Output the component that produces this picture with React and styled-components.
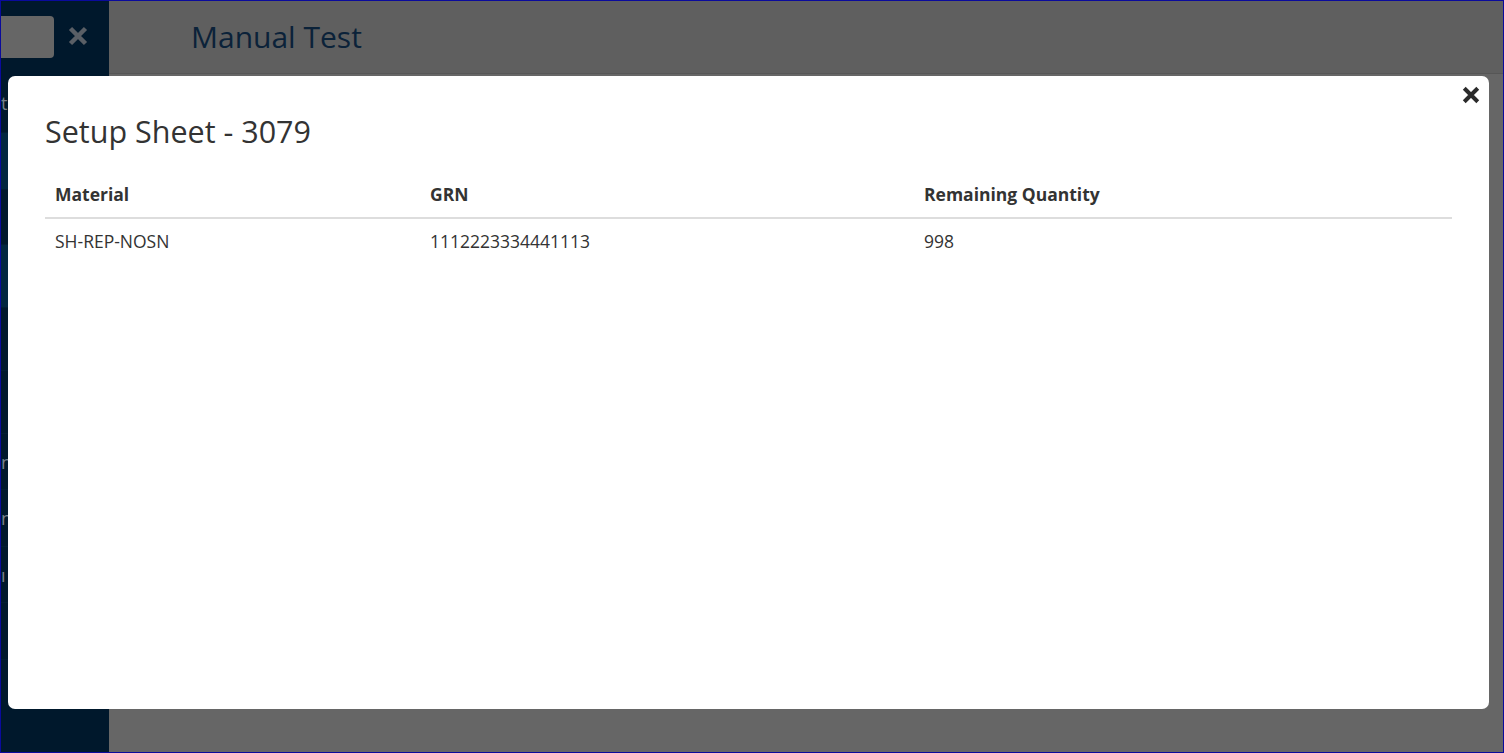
import React from 'react'
import styled, { createGlobalStyle } from 'styled-components'

const GlobalStyle = createGlobalStyle`
    html, body {
        margin: 0;
        padding: 0;
        background: #666666;
    }
    body {
        font-family: "Open Sans", "Liberation Sans", sans-serif;
    }
`

const rows = [
    { material: 'SH-REP-NOSN', grn: '1112223334441113', qty: '998' },
]

const menu = [
    { label: 'te', active: false, height: 60 },
    { label: '', active: true, height: 57 },
    { label: '', active: false, height: 55 },
    { label: '', active: true, height: 63 },
    { label: '', active: false, height: 63 },
    { label: '', active: false, height: 63 },
    { label: 'n', active: false, height: 56 },
    { label: 'n', active: false, height: 57 },
    { label: 'ı', active: false, height: 56 },
    { label: '', active: false, height: 57 },
]

const CloseIcon = ({ size, color }) => (
    <svg width={size} height={size} viewBox="0 0 16 16">
        <path d="M2 2 L14 14 M14 2 L2 14" stroke={color} strokeWidth="3.6" strokeLinecap="butt" />
    </svg>
)

const App = () => {
    return (
        <>
        <GlobalStyle />
        <Frame>
            <Sidebar>
                <SideTop>
                    <SearchBox />
                    <SideClose>
                        <CloseIcon size={20} color="#5a5f66" />
                    </SideClose>
                </SideTop>
                <Menu>
                    {menu.map((item, i) => (
                        <MenuItem key={i} $active={item.active} $h={item.height}>
                            {item.label}
                        </MenuItem>
                    ))}
                </Menu>
            </Sidebar>
            <Main>
                <Header>
                    <PageTitle>Manual Test</PageTitle>
                </Header>
            </Main>
            <Modal>
                <ModalClose>
                    <CloseIcon size={18} color="#2b2b2b" />
                </ModalClose>
                <ModalTitle>Setup Sheet - 3079</ModalTitle>
                <Table>
                    <thead>
                        <tr>
                            <Th $w="375px">Material</Th>
                            <Th $w="494px">GRN</Th>
                            <Th>Remaining Quantity</Th>
                        </tr>
                    </thead>
                    <tbody>
                        {rows.map(row => (
                            <tr key={row.grn}>
                                <Td>{row.material}</Td>
                                <Td>{row.grn}</Td>
                                <Td>{row.qty}</Td>
                            </tr>
                        ))}
                    </tbody>
                </Table>
            </Modal>
        </Frame>
        </>
    );
};

const Frame = styled.div`
    position: relative;
    width: 1504px;
    height: 753px;
    box-sizing: border-box;
    border: 1px solid #0a0a9c;
    display: flex;
    overflow: hidden;
    background: #666666;
`
const Sidebar = styled.div`
    width: 108px;
    flex-shrink: 0;
    background: #00182c;
    display: flex;
    flex-direction: column;
`
const SideTop = styled.div`
    height: 72px;
    display: flex;
    align-items: flex-start;
    padding-top: 15px;
    box-sizing: border-box;
`
const SearchBox = styled.div`
    width: 60px;
    height: 42px;
    margin-left: -7px;
    background: #666666;
    border-radius: 4px;
`
const SideClose = styled.div`
    margin-left: 14px;
    margin-top: 10px;
    display: flex;
`
const Menu = styled.div`
    display: flex;
    flex-direction: column;
`
const MenuItem = styled.div`
    height: ${p => p.$h}px;
    box-sizing: border-box;
    border-bottom: 1px solid #031d33;
    background: ${p => (p.$active ? '#02263f' : '#00182c')};
    color: #77808a;
    font-size: 18px;
    display: flex;
    align-items: center;
`
const Main = styled.div`
    flex: 1;
    display: flex;
    flex-direction: column;
`
const Header = styled.div`
    height: 72px;
    background: #5f5f5f;
    border-bottom: 1px solid #565656;
    display: flex;
    align-items: center;
    padding-left: 82px;
`
const PageTitle = styled.h1`
    margin: 0;
    font-size: 30px;
    font-weight: 400;
    color: #0b2239;
    line-height: 1.2;
`
const Modal = styled.div`
    position: absolute;
    left: 7px;
    top: 75px;
    width: 1481px;
    height: 633px;
    box-sizing: border-box;
    background: #ffffff;
    border-radius: 7px;
    padding: 37px 37px;
    color: #333333;
`
const ModalClose = styled.div`
    position: absolute;
    top: 10px;
    right: 9px;
    display: flex;
    cursor: pointer;
`
const ModalTitle = styled.h3`
    margin: 0 0 23px;
    font-size: 30.5px;
    font-weight: 400;
    line-height: 1.2;
    color: #333333;
`
const Table = styled.table`
    width: 100%;
    table-layout: fixed;
    border-collapse: collapse;
    font-size: 17.5px;
    line-height: 24px;
`
const Th = styled.th`
    width: ${p => p.$w || 'auto'};
    box-sizing: border-box;
    text-align: left;
    font-weight: 700;
    padding: 9px 10px 11px;
    border-bottom: 2px solid #dddddd;
`
const Td = styled.td`
    padding: 10px;
`

export default App
